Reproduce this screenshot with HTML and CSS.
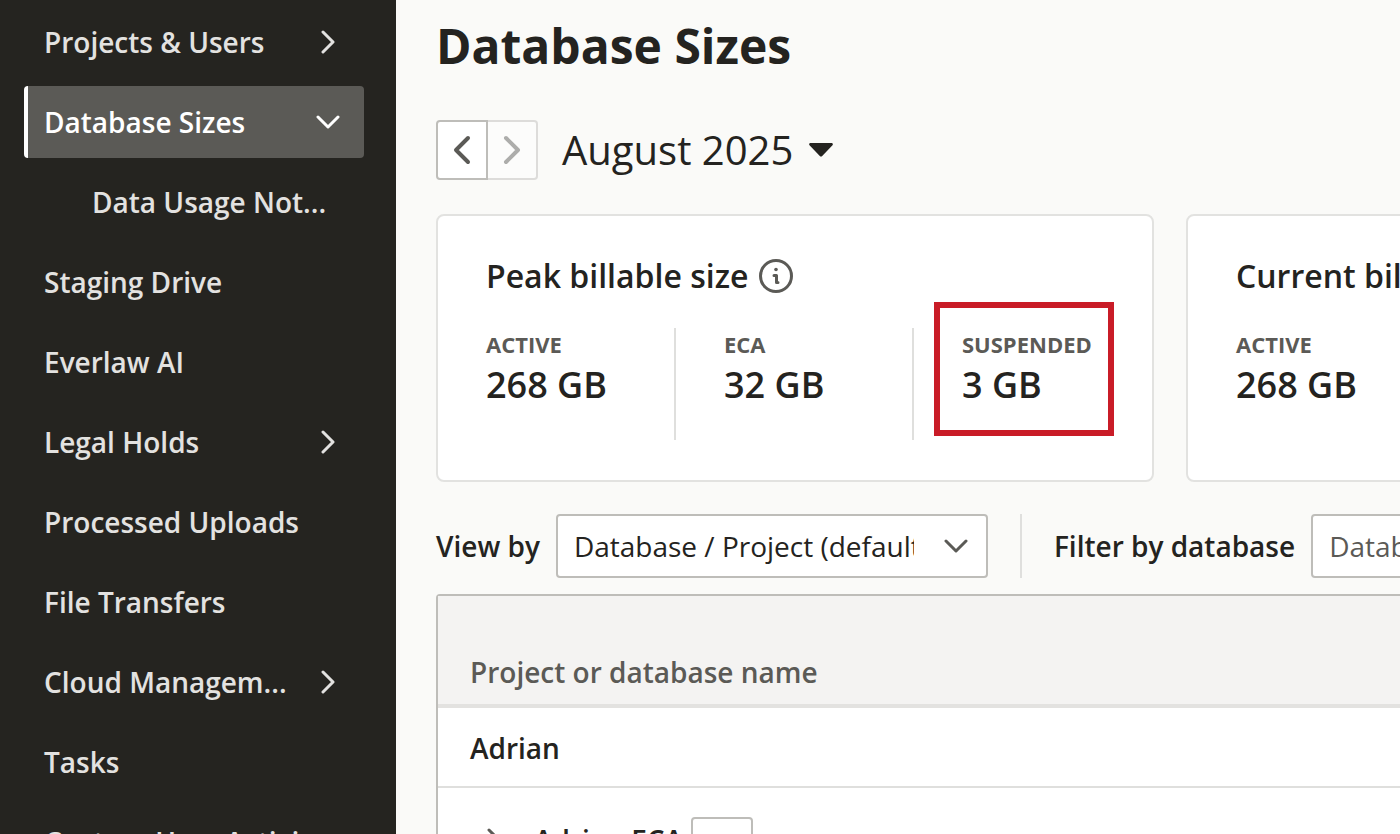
FILE: index.html
```html
<!DOCTYPE html>
<html lang="en">
<head>
<meta charset="utf-8">
<title>Database Sizes</title>
<meta name="viewport" content="width=device-width, initial-scale=1">
<link rel="stylesheet" href="styles.css">
</head>
<body>
<div class="app">
  <nav class="sidebar" aria-label="Administration">
    <a class="nav-item" href="#">Projects &amp; Users
      <svg class="nav-icon" viewBox="0 0 24 24" aria-hidden="true"><path d="M7 2l10 10L7 22"/></svg></a>
    <a class="nav-item nav-item-active" href="#" aria-current="page">Database Sizes
      <svg class="nav-icon" viewBox="0 0 24 24" aria-hidden="true"><path d="M2 7l10 10L22 7"/></svg></a>
    <a class="nav-item nav-item-child" href="#">Data Usage Not...</a>
    <a class="nav-item" href="#">Staging Drive</a>
    <a class="nav-item" href="#">Everlaw AI</a>
    <a class="nav-item" href="#">Legal Holds
      <svg class="nav-icon" viewBox="0 0 24 24" aria-hidden="true"><path d="M7 2l10 10L7 22"/></svg></a>
    <a class="nav-item" href="#">Processed Uploads</a>
    <a class="nav-item" href="#">File Transfers</a>
    <a class="nav-item" href="#">Cloud Managem...
      <svg class="nav-icon" viewBox="0 0 24 24" aria-hidden="true"><path d="M7 2l10 10L7 22"/></svg></a>
    <a class="nav-item" href="#">Tasks</a>
    <a class="nav-item" href="#">Custom User Activi...</a>
  </nav>

  <main class="main">
    <h1 class="title">Database Sizes</h1>

    <div class="period">
      <div class="pager">
        <button class="pager-button" type="button" aria-label="Previous month">
          <svg class="pager-icon" viewBox="0 0 32 32" aria-hidden="true"><path d="M22 4L10 16l12 12"/></svg>
        </button>
        <button class="pager-button pager-next" type="button" aria-label="Next month" disabled>
          <svg class="pager-icon" viewBox="0 0 32 32" aria-hidden="true"><path d="M10 4l12 12-12 12"/></svg>
        </button>
      </div>
      <button class="month" type="button">August 2025
        <svg class="month-caret" viewBox="0 0 24 14" aria-hidden="true"><path d="M1.500 0h21c1.200 0 1.800 1.300 1 2.200L13.200 13c-.7.800-1.700.800-2.400 0L.5 2.200C-.3 1.300.3 0 1.500 0z"/></svg>
      </button>
    </div>

    <div class="cards">
      <section class="card">
        <h2 class="card-title">Peak billable size
          <svg class="info" viewBox="0 0 34 34" role="img" aria-label="Information"><circle class="info-ring" cx="17" cy="17" r="15.500"/><circle class="info-dot" cx="17" cy="10.500" r="1.800"/><path class="info-stem" d="M15 16.500h2.500v7M17.500 23.500h1.500"/></svg>
        </h2>
        <dl class="stats">
          <div class="stat"><dt class="stat-name">ACTIVE</dt><dd class="stat-value">268 GB</dd></div>
          <div class="stat"><dt class="stat-name">ECA</dt><dd class="stat-value">32 GB</dd></div>
          <div class="stat stat-marked"><dt class="stat-name">SUSPENDED</dt><dd class="stat-value">3 GB</dd></div>
        </dl>
      </section>
      <section class="card">
        <h2 class="card-title">Current billable size</h2>
        <dl class="stats">
          <div class="stat"><dt class="stat-name">ACTIVE</dt><dd class="stat-value">268 GB</dd></div>
        </dl>
      </section>
    </div>

    <div class="filters">
      <label class="filter-label" for="view-by">View by</label>
      <div class="select-wrap">
        <select class="select" id="view-by"><option>Database / Project (default)</option></select>
        <svg class="select-icon" viewBox="0 0 24 24" aria-hidden="true"><path d="M2 7l10 10L22 7"/></svg>
      </div>
      <div class="filter-divider"></div>
      <label class="filter-label" for="filter-db">Filter by database</label>
      <input class="input" id="filter-db" type="text" placeholder="Database">
    </div>

    <table class="table">
      <thead>
        <tr><th class="head-cell" scope="col">Project or database name</th></tr>
      </thead>
      <tbody>
        <tr><td class="cell">Adrian</td></tr>
        <tr><td class="cell">
          <div class="project">
            <button class="expand" type="button" aria-label="Expand Adrian ECA">
              <svg class="expand-icon" viewBox="0 0 24 24" aria-hidden="true"><path d="M7 2l10 10L7 22"/></svg>
            </button>
            <span class="project-name">Adrian ECA</span>
            <button class="row-action" type="button" aria-label="Options">
            </button>
          </div>
        </td></tr>
      </tbody>
    </table>
  </main>
</div>
</body>
</html>
```
FILE: styles.css
```css
* {
  box-sizing: border-box;
}

body {
  margin: 0;
  background: #fafaf8;
  color: #242320;
  font-family: "Open Sans", "Noto Sans", sans-serif;
  font-size: 28px;
  line-height: 40px;
}

button,
select,
input {
  font: inherit;
  color: inherit;
}

svg {
  flex: none;
  fill: none;
  stroke: currentColor;
  stroke-width: 3;
  stroke-linecap: round;
  stroke-linejoin: round;
}

.app {
  display: flex;
  height: 100vh;
  overflow: hidden;
}

/* Sidebar */

.sidebar {
  display: flex;
  flex: none;
  flex-direction: column;
  gap: 8px;
  width: 396px;
  padding: 6px 32px 0 24px;
  overflow: hidden;
  background: #252420;
}

.nav-item {
  display: flex;
  flex: none;
  align-items: center;
  justify-content: space-between;
  height: 72px;
  padding: 0 24px 0 16px;
  border-left: 4px solid transparent;
  border-radius: 4px;
  color: #e3e2e0;
  font-weight: 600;
  text-decoration: none;
  white-space: nowrap;
}

.nav-item-active {
  border-left-color: #fff;
  background: #5b5a56;
  color: #fff;
}

.nav-item-child {
  padding-left: 64px;
}

.nav-icon {
  width: 24px;
  height: 24px;
}

/* Page heading and month picker */

.main {
  flex: 1;
  min-width: 0;
  padding: 14px 0 0 40px;
  overflow: hidden;
}

.title {
  margin: 0 0 42px;
  font-size: 48px;
  font-weight: 700;
  line-height: 64px;
}

.period {
  display: flex;
  align-items: center;
  gap: 24px;
  margin-bottom: 34px;
}

.pager {
  display: flex;
}

.pager-button {
  display: flex;
  align-items: center;
  justify-content: center;
  width: 52px;
  height: 60px;
  padding: 0;
  border: 2px solid #bebdb9;
  border-radius: 4px 0 0 4px;
  background: #fff;
  color: #5b5a56;
}

.pager-next {
  width: 50px;
  border-color: #dddcda;
  border-left: 0;
  border-radius: 0 4px 4px 0;
  background: #fcfcfb;
  color: #adadab;
}

.pager-icon {
  width: 32px;
  height: 32px;
  stroke-width: 4;
}

.month {
  display: flex;
  align-items: center;
  gap: 16px;
  padding: 0;
  border: 0;
  background: none;
  font-size: 40px;
  line-height: 60px;
}

.month-caret {
  width: 24px;
  height: 14px;
  fill: currentColor;
  stroke: none;
}

/* Size cards */

.cards {
  display: flex;
  gap: 32px;
  margin-bottom: 32px;
}

.card {
  flex: 0 0 718px;
  min-width: 0;
  padding: 36px 48px 40px;
  border: 2px solid #e2e2e0;
  border-radius: 8px;
  background: #fff;
}

.card-title {
  display: flex;
  align-items: center;
  gap: 11px;
  margin: 0 0 28px;
  font-size: 32px;
  font-weight: 600;
  line-height: 48px;
}

.info {
  width: 34px;
  height: 34px;
  color: #5b5a56;
}

.info-dot {
  fill: currentColor;
  stroke: none;
}

.stats {
  display: flex;
  gap: 48px;
  margin: 0;
}

.stat {
  position: relative;
  flex: none;
  width: 190px;
  height: 112px;
  border-right: 2px solid #dfdfdd;
}

.stat-marked {
  flex: 1;
  width: auto;
  min-width: 0;
  border-right: 0;
}

.stat-marked::after {
  content: "";
  position: absolute;
  inset: -26px -10px 4px -28px;
  border: 6px solid #c91c27;
}

.stat-name {
  color: #5b5a56;
  font-size: 22px;
  font-weight: 700;
  line-height: 32px;
}

.stat-value {
  margin: 0;
  font-size: 36px;
  font-weight: 600;
  line-height: 50px;
}

/* Filters */

.filters {
  display: flex;
  align-items: center;
  gap: 16px;
  margin-bottom: 16px;
}

.filter-label {
  flex: none;
  font-weight: 600;
}

.select-wrap {
  display: grid;
  flex: none;
  align-items: center;
  width: 432px;
}

.select {
  grid-area: 1 / 1;
  appearance: none;
  width: 100%;
  height: 64px;
  padding: 0 72px 0 16px;
  border: 2px solid #bebdb9;
  border-radius: 4px;
  background: #fff;
}

.select-icon {
  grid-area: 1 / 1;
  justify-self: end;
  width: 24px;
  height: 24px;
  margin-right: 20px;
  color: #5b5a56;
  pointer-events: none;
}

.filter-divider {
  flex: none;
  align-self: stretch;
  width: 2px;
  margin: 0 16px;
  background: #dfdfdd;
}

.input {
  flex: none;
  width: 432px;
  height: 64px;
  padding: 0 16px;
  border: 2px solid #bebdb9;
  border-radius: 4px;
  background: #fff;
}

.input::placeholder {
  color: #5b5a56;
  opacity: 1;
}

/* Table */

.table {
  width: calc(100% + 8px);
  border: 2px solid #bebdb9;
  border-radius: 4px;
  border-spacing: 0;
  background: #fff;
}

.head-cell {
  height: 112px;
  padding: 0 32px 12px;
  border-bottom: 4px solid #e3e2e0;
  background: #f4f3f2;
  color: #5b5a56;
  font-weight: 600;
  text-align: left;
  vertical-align: bottom;
}

.cell {
  height: 80px;
  padding: 2px 32px 0;
  border-bottom: 2px solid #dfdfdd;
  font-weight: 600;
}

.project {
  display: flex;
  align-items: center;
  height: 100px;
}

.expand {
  display: flex;
  padding: 0;
  margin: 0 28px 0 12px;
  border: 0;
  background: none;
  color: #5b5a56;
}

.expand-icon {
  width: 24px;
  height: 24px;
}

.row-action {
  width: 62px;
  height: 46px;
  margin-left: 8px;
  border: 2px solid #bebdb9;
  border-radius: 4px;
  background: #fff;
}
```
